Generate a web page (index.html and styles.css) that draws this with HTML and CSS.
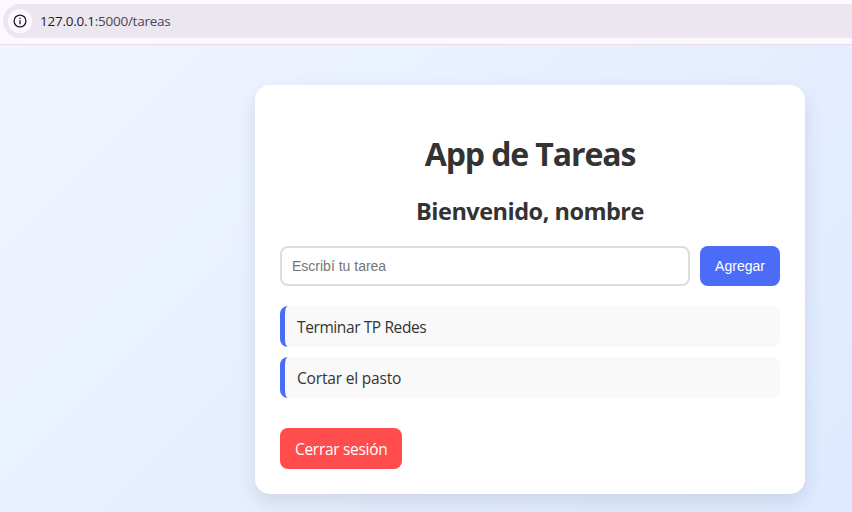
FILE: index.html
```html
<!DOCTYPE html>
<html lang="es">
<head>
<meta charset="utf-8">
<title>App de Tareas</title>
<link rel="stylesheet" href="styles.css">
</head>
<body>
<header class="toolbar">
  <div class="address">
    <span class="site-info">
      <svg width="14" height="14" viewBox="0 0 14 14" fill="none" stroke="#1f1b20" stroke-width="1.3">
        <circle cx="7" cy="7" r="5.9"/>
        <path d="M7 6.2v4M7 3.7v1.4"/>
      </svg>
    </span>
    <span class="url"><b>127.0.0.1</b>:5000/tareas</span>
  </div>
</header>
<main class="page">
  <section class="card">
    <h1>App de Tareas</h1>
    <h2>Bienvenido, nombre</h2>
    <form class="add">
      <input type="text" placeholder="Escribí tu tarea">
      <button type="button">Agregar</button>
    </form>
    <ul class="tasks">
      <li class="tight">Terminar TP Redes</li>
      <li>Cortar el pasto</li>
    </ul>
    <a class="logout">Cerrar sesión</a>
  </section>
</main>
</body>
</html>
```
FILE: styles.css
```css
* { box-sizing: border-box; }
body {
  margin: 0;
  width: 852px;
  height: 512px;
  overflow: hidden;
  display: flex;
  flex-direction: column;
  font-family: "Segoe UI", "Open Sans", "Noto Sans", sans-serif;
  color: #333;
}
.toolbar {
  flex: none;
  height: 45px;
  padding: 4px 0 0 3px;
  background: #fdf7ff;
  border-bottom: 1px solid #e6dde8;
}
.address {
  height: 34px;
  display: flex;
  align-items: center;
  gap: 8px;
  padding-left: 5px;
  border-radius: 17px 0 0 17px;
  background: #ece6f1;
}
.site-info {
  width: 24px;
  height: 24px;
  display: flex;
  align-items: center;
  justify-content: center;
  border-radius: 50%;
  background: #fdf7ff;
}
.url {
  font-size: 13.5px;
  line-height: 20px;
  letter-spacing: -0.25px;
  color: #4b474d;
  white-space: nowrap;
}
.url b { font-weight: 400; color: #1f1b20; }
.page {
  flex: 1;
  padding: 40px 0 0 255px;
  background: linear-gradient(135deg, #f0f4ff, #d9e8ff) 0 0 / 1060px 560px no-repeat;
}
.card {
  width: 550px;
  height: 409px;
  padding: 25px;
  border-radius: 15px;
  background: #fff;
  box-shadow: 0 8px 20px rgba(0, 0, 0, .1);
}
h1, h2 { text-align: center; white-space: nowrap; }
h1 {
  margin: 22px 0 20px;
  font-size: 32px;
  line-height: 43px;
  letter-spacing: -1.1px;
}
h2 {
  margin: 0 0 19px;
  font-size: 23.5px;
  line-height: 32px;
  letter-spacing: -0.5px;
}
.add { display: flex; gap: 10px; margin: 0 0 20px; }
.add input, .add button {
  height: 40px;
  font: 14px "Liberation Sans", Arial, sans-serif;
  border-radius: 8px;
}
.add input {
  flex: 1;
  padding: 0 10px;
  border: 2px solid #ddd;
  background: #fff;
}
.add input::placeholder { color: #757575; }
.add button {
  width: 80px;
  padding: 0;
  border: 0;
  background: #4a6cf7;
  color: #fff;
}
.tasks {
  list-style: none;
  margin: 0 0 30px;
  padding: 0;
  display: grid;
  gap: 10px;
}
.tasks li {
  height: 41px;
  padding: 0 12px;
  border-left: 5px solid #4a6cf7;
  border-radius: 8px;
  background: #f9f9f9;
  font-size: 15.5px;
  line-height: 43px;
  letter-spacing: -0.18px;
  white-space: nowrap;
}
.tasks .tight { letter-spacing: -0.4px; }
.logout {
  display: block;
  width: 122px;
  height: 41px;
  padding-left: 15px;
  border-radius: 8px;
  background: #ff4d4d;
  color: #fff;
  font-size: 15.5px;
  line-height: 43px;
  letter-spacing: -0.3px;
  white-space: nowrap;
}
```
